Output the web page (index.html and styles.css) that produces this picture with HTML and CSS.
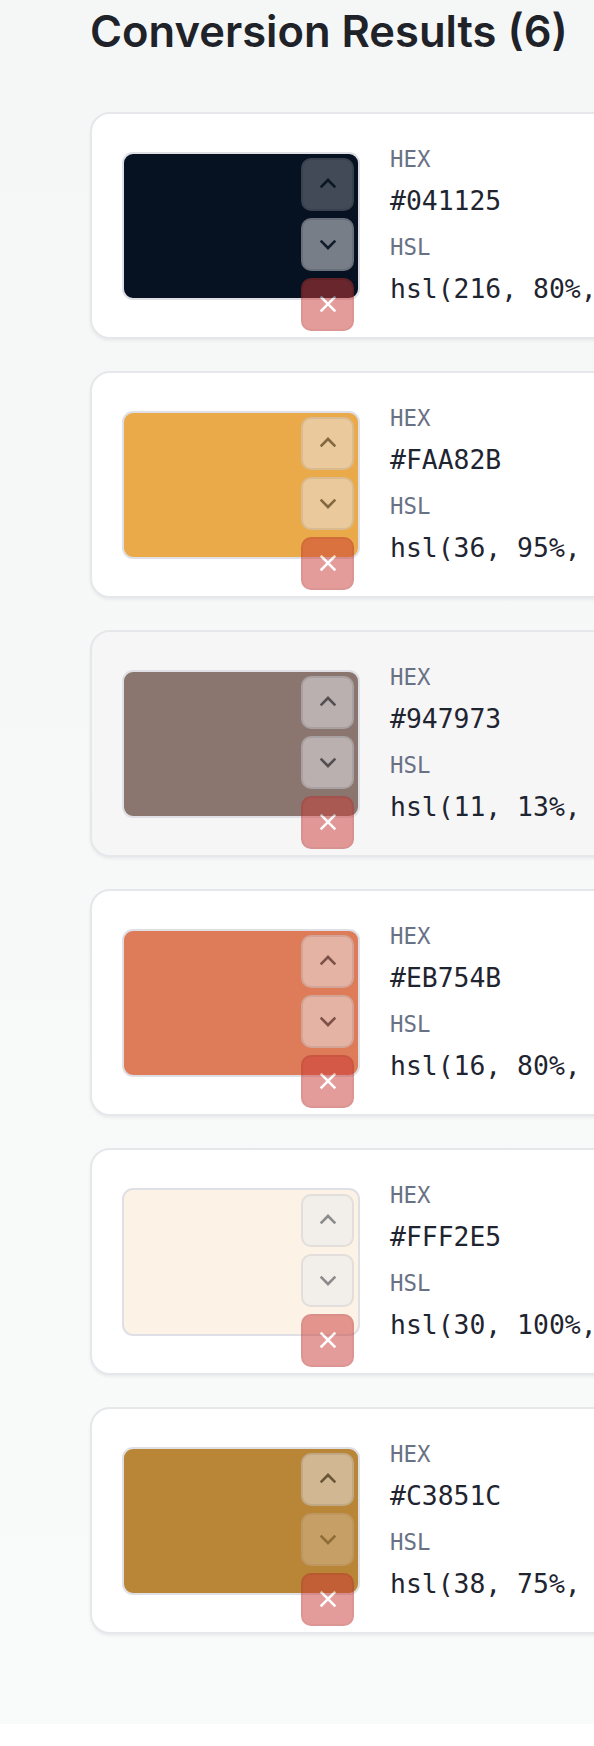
FILE: index.html
```html
<!DOCTYPE html>
<html lang="en">
<head>
<meta charset="utf-8">
<title>Conversion Results</title>
<link rel="stylesheet" href="styles.css">
</head>
<body>
<main class="page">
  <h1 class="title">Conversion Results (6)</h1>
  <ul class="results">
    <li class="card">
      <div class="swatch" style="background:#061121">
        <div class="controls">
          <button class="ctrl ctrl--disabled" aria-label="Move up"><svg class="icon" viewBox="0 0 24 24"><path d="M6.5 14.5L12 9l5.5 5.5"/></svg></button>
          <button class="ctrl" aria-label="Move down"><svg class="icon" viewBox="0 0 24 24"><path d="M6.5 9.5L12 15l5.5-5.5"/></svg></button>
          <button class="ctrl ctrl--remove" aria-label="Remove"><svg class="icon" viewBox="0 0 24 24"><path d="M6.5 6.5l11 11M17.5 6.5l-11 11"/></svg></button>
        </div>
      </div>
      <dl class="values">
        <dt class="label">HEX</dt><dd class="value">#041125</dd>
        <dt class="label">HSL</dt><dd class="value">hsl(216, 80%, 8%)</dd>
      </dl>
    </li>
    <li class="card">
      <div class="swatch" style="background:#ebaa4a">
        <div class="controls">
          <button class="ctrl" aria-label="Move up"><svg class="icon" viewBox="0 0 24 24"><path d="M6.5 14.5L12 9l5.5 5.5"/></svg></button>
          <button class="ctrl" aria-label="Move down"><svg class="icon" viewBox="0 0 24 24"><path d="M6.5 9.5L12 15l5.5-5.5"/></svg></button>
          <button class="ctrl ctrl--remove" aria-label="Remove"><svg class="icon" viewBox="0 0 24 24"><path d="M6.5 6.5l11 11M17.5 6.5l-11 11"/></svg></button>
        </div>
      </div>
      <dl class="values">
        <dt class="label">HEX</dt><dd class="value">#FAA82B</dd>
        <dt class="label">HSL</dt><dd class="value">hsl(36, 95%, 57%)</dd>
      </dl>
    </li>
    <li class="card card--active">
      <div class="swatch" style="background:#8a766f">
        <div class="controls">
          <button class="ctrl" aria-label="Move up"><svg class="icon" viewBox="0 0 24 24"><path d="M6.5 14.5L12 9l5.5 5.5"/></svg></button>
          <button class="ctrl" aria-label="Move down"><svg class="icon" viewBox="0 0 24 24"><path d="M6.5 9.5L12 15l5.5-5.5"/></svg></button>
          <button class="ctrl ctrl--remove" aria-label="Remove"><svg class="icon" viewBox="0 0 24 24"><path d="M6.5 6.5l11 11M17.5 6.5l-11 11"/></svg></button>
        </div>
      </div>
      <dl class="values">
        <dt class="label">HEX</dt><dd class="value">#947973</dd>
        <dt class="label">HSL</dt><dd class="value">hsl(11, 13%, 52%)</dd>
      </dl>
    </li>
    <li class="card">
      <div class="swatch" style="background:#de7b58">
        <div class="controls">
          <button class="ctrl" aria-label="Move up"><svg class="icon" viewBox="0 0 24 24"><path d="M6.5 14.5L12 9l5.5 5.5"/></svg></button>
          <button class="ctrl" aria-label="Move down"><svg class="icon" viewBox="0 0 24 24"><path d="M6.5 9.5L12 15l5.5-5.5"/></svg></button>
          <button class="ctrl ctrl--remove" aria-label="Remove"><svg class="icon" viewBox="0 0 24 24"><path d="M6.5 6.5l11 11M17.5 6.5l-11 11"/></svg></button>
        </div>
      </div>
      <dl class="values">
        <dt class="label">HEX</dt><dd class="value">#EB754B</dd>
        <dt class="label">HSL</dt><dd class="value">hsl(16, 80%, 61%)</dd>
      </dl>
    </li>
    <li class="card">
      <div class="swatch" style="background:#fcf2e6">
        <div class="controls">
          <button class="ctrl" aria-label="Move up"><svg class="icon" viewBox="0 0 24 24"><path d="M6.5 14.5L12 9l5.5 5.5"/></svg></button>
          <button class="ctrl" aria-label="Move down"><svg class="icon" viewBox="0 0 24 24"><path d="M6.5 9.5L12 15l5.5-5.5"/></svg></button>
          <button class="ctrl ctrl--remove" aria-label="Remove"><svg class="icon" viewBox="0 0 24 24"><path d="M6.5 6.5l11 11M17.5 6.5l-11 11"/></svg></button>
        </div>
      </div>
      <dl class="values">
        <dt class="label">HEX</dt><dd class="value">#FFF2E5</dd>
        <dt class="label">HSL</dt><dd class="value">hsl(30, 100%, 95%)</dd>
      </dl>
    </li>
    <li class="card">
      <div class="swatch" style="background:#b98536">
        <div class="controls">
          <button class="ctrl" aria-label="Move up"><svg class="icon" viewBox="0 0 24 24"><path d="M6.5 14.5L12 9l5.5 5.5"/></svg></button>
          <button class="ctrl ctrl--disabled" aria-label="Move down"><svg class="icon" viewBox="0 0 24 24"><path d="M6.5 9.5L12 15l5.5-5.5"/></svg></button>
          <button class="ctrl ctrl--remove" aria-label="Remove"><svg class="icon" viewBox="0 0 24 24"><path d="M6.5 6.5l11 11M17.5 6.5l-11 11"/></svg></button>
        </div>
      </div>
      <dl class="values">
        <dt class="label">HEX</dt><dd class="value">#C3851C</dd>
        <dt class="label">HSL</dt><dd class="value">hsl(38, 75%, 44%)</dd>
      </dl>
    </li>
  </ul>
</main>
</body>
</html>
```
FILE: styles.css
```css
html, body {
  margin: 0;
  padding: 0;
  background: #ffffff;
}

.page {
  background: linear-gradient(#f5f7f7, #f9fafa);
  padding: 5px 0 90px 90px;
  overflow: hidden;
}

.title {
  margin: 0 0 55px;
  font-family: Inter, "Noto Sans", sans-serif;
  font-weight: 600;
  font-size: 43.5px;
  line-height: 1.2;
  color: #1f2329;
}

.results {
  list-style: none;
  margin: 0;
  padding: 0;
  width: 720px;
  display: flex;
  flex-direction: column;
  gap: 32px;
}

.card {
  display: flex;
  align-items: center;
  gap: 30px;
  padding: 29px 30px;
  border: 2px solid #e6e7eb;
  border-radius: 20px;
  background: #ffffff;
  box-shadow: 0 2px 3px rgba(16, 24, 40, 0.06);
}

.card--active {
  background: #f6f6f7;
}

.swatch {
  position: relative;
  flex: none;
  box-sizing: border-box;
  width: 238px;
  height: 148px;
  border: 2px solid #dfe0e6;
  border-radius: 11px;
}

.controls {
  position: absolute;
  top: 4px;
  right: 4px;
  display: flex;
  flex-direction: column;
  gap: 7px;
}

.ctrl {
  box-sizing: border-box;
  width: 53px;
  height: 53px;
  padding: 0;
  display: grid;
  place-items: center;
  border: 2px solid #c9ccd3;
  border-radius: 10px;
  background: #eaebef;
  color: #1f2937;
  opacity: 0.5;
}

.ctrl--disabled {
  opacity: 0.26;
}

.ctrl--remove {
  background: #cb3b37;
  border-color: #b8302c;
  color: #ffffff;
}

.icon {
  width: 32px;
  height: 32px;
  fill: none;
  stroke: currentColor;
  stroke-width: 2;
  stroke-linecap: butt;
  stroke-linejoin: miter;
}

.values {
  margin: 0;
  display: flex;
  flex-direction: column;
  font-family: "DejaVu Sans Mono", "Liberation Mono", monospace;
}

.label {
  font-size: 22.4px;
  line-height: 33.6px;
  color: #697185;
  margin: 0 0 5px;
}

.value {
  font-size: 26.4px;
  line-height: 38.4px;
  color: #1f2530;
  margin: 0 0 11px;
  white-space: nowrap;
}

.value:last-child {
  margin-bottom: 0;
}
```
